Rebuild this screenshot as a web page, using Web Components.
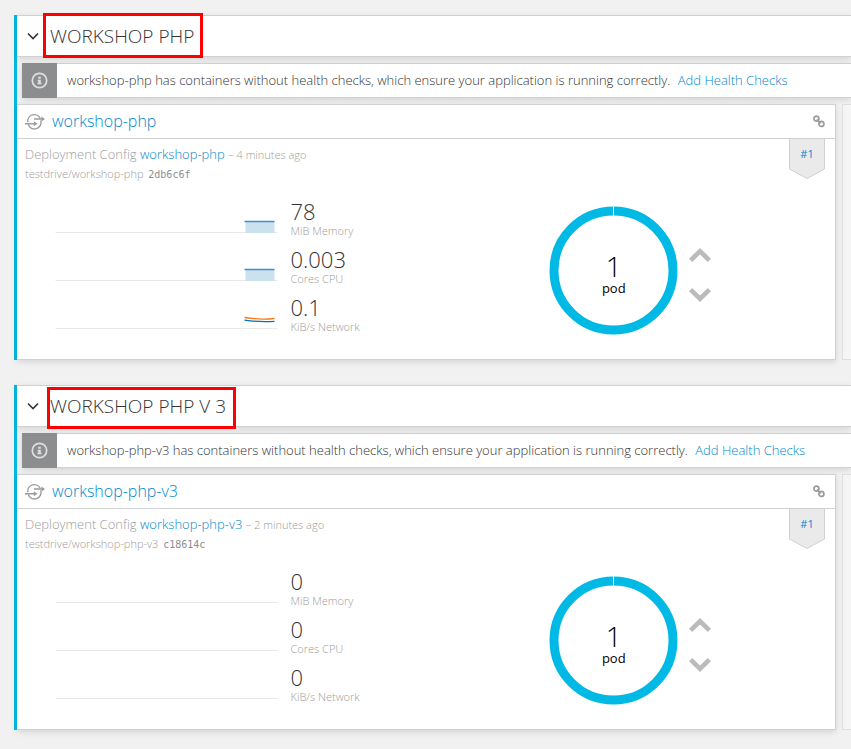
<!DOCTYPE html>
<html lang="en">
<head>
<meta charset="utf-8">
<meta name="viewport" content="width=device-width, initial-scale=1">
<title>Project overview</title>
<style>
  body {
    margin: 0;
    background: #f1f1f1;
    color: #333;
    font-family: "Open Sans", "Liberation Sans", sans-serif;
    font-weight: 300;
    font-size: 13px;
    line-height: 20px;
  }
  main {
    display: flex;
    flex-direction: column;
    gap: 25px;
    padding: 15px 0 19px 14px;
    overflow: hidden;
  }
</style>
</head>
<body>
<main>
  <service-group>
    <group-header slot="header" label="WORKSHOP PHP" mark="first"></group-header>
    <health-alert>workshop-php has containers without health checks, which ensure your application is running correctly.</health-alert>
    <tile-row>
      <deploy-tile name="workshop-php" age="4 minutes ago" image="testdrive/workshop-php" commit="2db6c6f" pods="1">
        <metric-row value="78" unit="MiB Memory" chart="area"></metric-row>
        <metric-row value="0.003" unit="Cores CPU" chart="area"></metric-row>
        <metric-row value="0.1" unit="KiB/s Network" chart="lines"></metric-row>
      </deploy-tile>
    </tile-row>
  </service-group>
  <service-group>
    <group-header slot="header" label="WORKSHOP PHP V 3" mark="second"></group-header>
    <health-alert>workshop-php-v3 has containers without health checks, which ensure your application is running correctly.</health-alert>
    <tile-row>
      <deploy-tile name="workshop-php-v3" age="2 minutes ago" image="testdrive/workshop-php-v3" commit="c18614c" pods="1">
        <metric-row value="0" unit="MiB Memory"></metric-row>
        <metric-row value="0" unit="Cores CPU"></metric-row>
        <metric-row value="0" unit="KiB/s Network"></metric-row>
      </deploy-tile>
    </tile-row>
  </service-group>
</main>
<script>
const linkCss = 'a { color: #0088ce; text-decoration: none; } a:hover { text-decoration: underline; }';

class BaseElement extends HTMLElement {
  connectedCallback() {
    if (this.shadowRoot) return;
    this.attachShadow({ mode: 'open' }).innerHTML = this.render();
  }
  attr(name) { return this.getAttribute(name) || ''; }
}

customElements.define('service-group', class extends BaseElement {
  render() {
    return `<style>
      :host { display: block; border-left: 3px solid #00b9e4; }
      section { display: flex; flex-direction: column; gap: 6px; }
    </style>
    <section><slot name="header"></slot><slot></slot></section>`;
  }
});

customElements.define('group-header', class extends BaseElement {
  render() {
    return `<style>
      :host { display: block; position: relative; background: #fff; border: 1px solid #d1d1d1; border-width: 1px 0; box-shadow: 0 2px 6px rgba(3,3,3,.12); }
      header { display: flex; align-items: center; gap: 11px; padding: 6px 10px; }
      button { display: flex; padding: 0; border: 0; background: none; color: #333; }
      h2 { margin: 0; font-size: 19px; line-height: 28px; font-weight: 300; color: #333; white-space: nowrap; }
      .mark { position: absolute; box-sizing: border-box; border: 3px solid #f00; pointer-events: none; }
      .first { left: 26px; top: -3px; width: 160px; height: 45px; }
      .second { left: 30px; top: 1px; width: 189px; height: 42px; }
    </style>
    <header>
      <button type="button" aria-label="Collapse ${this.attr('label')}" aria-expanded="true">
        <svg width="12" height="8" viewBox="0 0 12 8" fill="none" stroke="currentColor" stroke-width="1.600"><path d="M1 1.500 6 6.500 11 1.500"/></svg>
      </button>
      <h2>${this.attr('label')}</h2>
    </header>
    <div class="mark ${this.attr('mark')}"></div>`;
  }
});

customElements.define('health-alert', class extends BaseElement {
  render() {
    return `<style>
      ${linkCss}
      :host { display: block; margin-left: 5px; background: #fff; box-shadow: 0 2px 6px rgba(3,3,3,.12); }
      .row { display: flex; align-items: stretch; }
      .icon { display: flex; align-items: center; justify-content: center; width: 35px; background: #8b8d8f; }
      p { flex: 1; margin: 0; padding: 6px 0 7px 10px; border: 1px solid #d1d1d1; border-width: 1px 0; white-space: nowrap; }
      a { margin-left: 4px; }
    </style>
    <div class="row" role="status">
      <span class="icon"><svg width="17" height="17" viewBox="0 0 17 17" fill="none"><circle cx="8.500" cy="8.500" r="7.200" stroke="#dedfe0" stroke-width="1.700"/><path d="M7.200 4.800h2.600v2H7.200zM6.700 7.800h3.100v3h.7v1.500H6.500v-1.500h.7V9.200h-.5z" fill="#dedfe0"/></svg></span>
      <p><slot></slot> <a href="#health">Add Health Checks</a></p>
    </div>`;
  }
});

customElements.define('tile-row', class extends BaseElement {
  render() {
    return `<style>
      :host { display: grid; grid-template-columns: minmax(0, 1fr) 9px; gap: 6px; }
      .next { border: 1px solid #dedede; border-right: 0; border-radius: 1px 0 0 1px; background: #f5f5f5; }
    </style>
    <slot></slot><div class="next"></div>`;
  }
});

customElements.define('deploy-tile', class extends BaseElement {
  render() {
    const name = this.attr('name');
    return `<style>
      ${linkCss}
      :host { display: block; background: #fff; border: 1px solid #d1d1d1; border-left: 0; box-shadow: 0 2px 6px rgba(3,3,3,.12); }
      header { display: flex; align-items: center; gap: 7px; padding: 0 10px 0 8px; border-bottom: 1px solid #d1d1d1; }
      h3 { flex: 1; margin: 0; font-size: 16px; line-height: 33px; font-weight: 300; }
      button { display: flex; padding: 0; border: 0; background: none; color: #9c9c9c; }
      .details { position: relative; padding: 5px 8px 0; color: #9c9c9c; }
      .details p { margin: 0; }
      small, .image { font-size: 11px; }
      small, code { line-height: 12px; }
      code { margin-left: 2px; font-family: "DejaVu Sans Mono", monospace; font-size: 10px; font-weight: 400; color: #8b8d8f; }
      .badge { position: absolute; top: 0; right: 10px; width: 36px; height: 40px; }
      .badge svg { display: block; }
      .badge a { position: absolute; inset: 5px 0 auto; text-align: center; font-size: 11px; font-weight: 400; }
      .body { display: grid; grid-template-columns: 1fr 1fr; padding: 16px 3px 15px 0; }
      .metrics { padding: 0 38px; }
      pod-donut { justify-self: center; margin: 6px 0 0 4px; }
    </style>
    <header>
      <svg width="20" height="17" viewBox="0 0 20 17" fill="none" stroke="#9c9c9c" stroke-width="1.400"><path d="M15.300 5.600A6.500 6.500 0 0 0 2.900 9.200M3.300 11.500A6.500 6.500 0 0 0 15.700 7.400"/><path d="M0 10.700H10M9 6H18"/><path d="M8.800 8.200 12.500 10.700 8.800 13.200zM16.500 3.500 20 6 16.500 8.500z" fill="#9c9c9c" stroke="none"/></svg>
      <h3><a href="#${name}">${name}</a></h3>
      <button type="button" aria-label="Group service"><svg width="12" height="14" viewBox="0 0 12 14" fill="none" stroke="currentColor" stroke-width="1.700"><circle cx="3.400" cy="3.700" r="2.500"/><circle cx="8.400" cy="8.900" r="2.500"/><path d="M4 4.300 7.800 8.300"/></svg></button>
    </header>
    <div class="details">
      <p>Deployment Config <a href="#dc-${name}">${name}</a> <small>– ${this.attr('age')}</small></p>
      <p class="image">${this.attr('image')} <code>${this.attr('commit')}</code></p>
      <div class="badge">
        <svg width="36" height="40" viewBox="0 0 36 40"><path d="M.5-1V30L18 39.500 35.500 30V-1z" fill="#eaeaea" stroke="#d1d1d1"/></svg>
        <a href="#deployment-1">#1</a>
      </div>
    </div>
    <div class="body">
      <div class="metrics"><slot></slot></div>
      <pod-donut count="${this.attr('pods')}"></pod-donut>
    </div>`;
  }
});

customElements.define('metric-row', class extends BaseElement {
  render() {
    const charts = {
      area: '<path d="M190 21.500H219V33H190z" fill="#cce1f0"/><path d="M189 21.500H219" stroke="#0071bc" stroke-opacity=".75" stroke-width="1.500"/>',
      lines: '<path d="M189 21.500Q204 24 219 22.500" stroke="#f57c14" stroke-width="1.300"/><path d="M189 24.200Q204 26.200 219 25.300" stroke="#0071bc" stroke-width="1.300"/>'
    };
    return `<style>
      :host { display: grid; grid-template-columns: minmax(0, 1fr) 96px; gap: 13px; }
      svg { display: block; width: 100%; height: 48px; }
      .value { font-size: 22px; line-height: 22px; }
      .unit { font-size: 11px; line-height: 18px; color: #9c9c9c; white-space: nowrap; }
    </style>
    <svg viewBox="0 0 222 48" preserveAspectRatio="xMaxYMin meet" fill="none" aria-hidden="true"><path d="M0 32.500H222" stroke="#e8e8e8"/>${charts[this.attr('chart')] || ''}</svg>
    <div><div class="value">${this.attr('value')}</div><div class="unit">${this.attr('unit')}</div></div>`;
  }
});

customElements.define('pod-donut', class extends BaseElement {
  render() {
    return `<style>
      :host { display: flex; gap: 11px; align-items: center; align-self: start; }
      .ring { display: grid; place-items: center; color: #000; }
      .ring > * { grid-area: 1 / 1; }
      .text { padding-top: 7px; text-align: center; }
      .count { font-size: 28px; line-height: 28px; }
      .label { font-size: 13px; line-height: 16px; font-weight: 400; }
      .scale { display: flex; flex-direction: column; gap: 26px; padding-top: 9px; }
      button { display: flex; padding: 0; border: 0; background: none; color: #bbb; }
    </style>
    <div class="ring">
      <svg width="129" height="129" viewBox="0 0 129 129" fill="none"><circle cx="64.500" cy="64.500" r="59.500" stroke="#00b9e4" stroke-width="9"/><path d="M64.500 0V10" stroke="#fff"/></svg>
      <div class="text"><div class="count">${this.attr('count')}</div><div class="label">pod</div></div>
    </div>
    <div class="scale">
      <button type="button" aria-label="Scale up"><svg width="22" height="14" viewBox="0 0 22 14"><path d="M11 0 22 10.700 18.800 14 11 6.400 3.200 14 0 10.700z" fill="currentColor"/></svg></button>
      <button type="button" aria-label="Scale down"><svg width="22" height="14" viewBox="0 0 22 14"><path d="M11 14 22 3.300 18.800 0 11 7.600 3.200 0 0 3.300z" fill="currentColor"/></svg></button>
    </div>`;
  }
});
</script>
</body>
</html>
